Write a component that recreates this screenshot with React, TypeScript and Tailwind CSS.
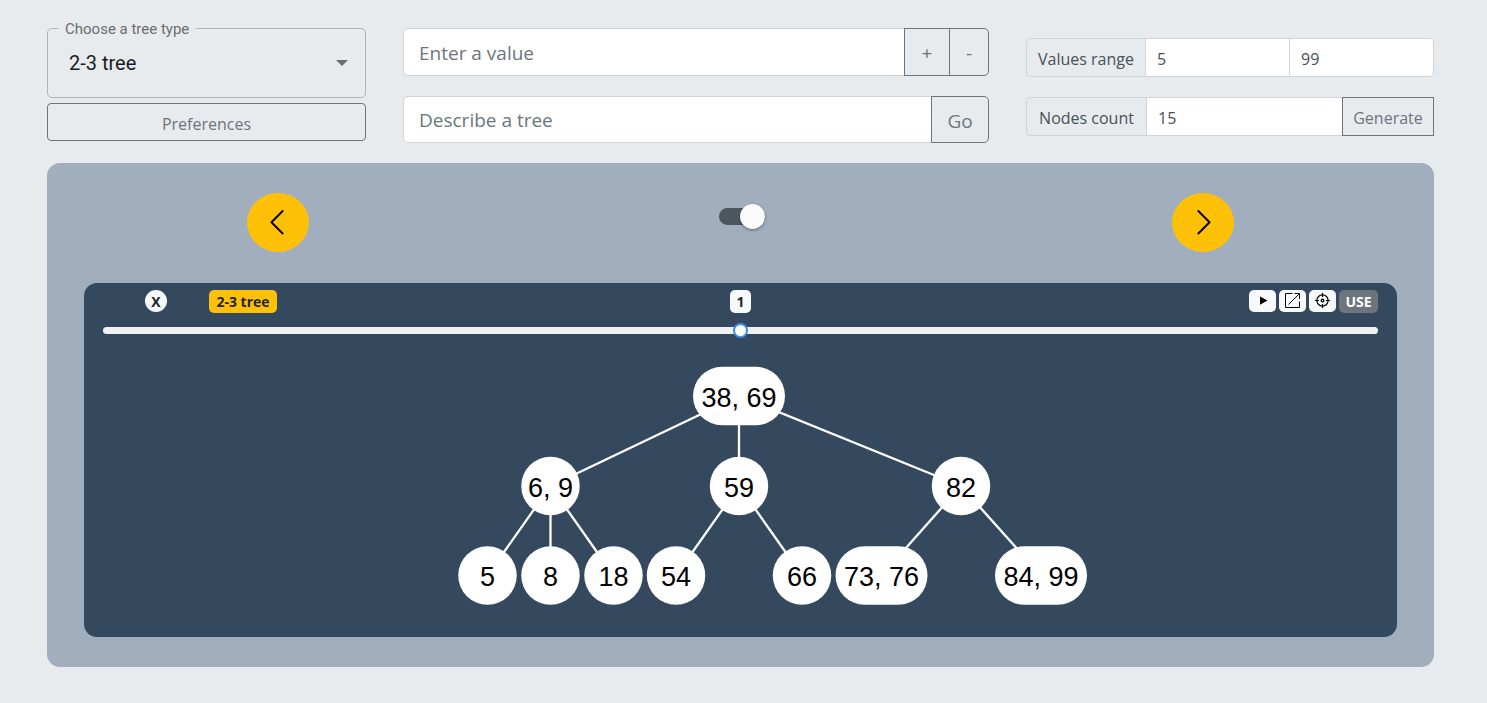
import { useState } from "react";

type TreeNode = { label: string; x: number; y: number; wide?: boolean };

const nodes: TreeNode[] = [
  { label: "38, 69", x: 359, y: 51, wide: true },
  { label: "6, 9", x: 170.5, y: 141 },
  { label: "59", x: 359, y: 141 },
  { label: "82", x: 581, y: 141 },
  { label: "5", x: 107.5, y: 230.5 },
  { label: "8", x: 170.5, y: 230.5 },
  { label: "18", x: 233.5, y: 230.5 },
  { label: "54", x: 296, y: 230.5 },
  { label: "66", x: 422, y: 230.5 },
  { label: "73, 76", x: 501.5, y: 230.5, wide: true },
  { label: "84, 99", x: 661, y: 230.5, wide: true },
];

const edges: [number, number][] = [
  [0, 1],
  [0, 2],
  [0, 3],
  [1, 4],
  [1, 5],
  [1, 6],
  [2, 7],
  [2, 8],
  [3, 9],
  [3, 10],
];

function TreeDiagram() {
  return (
    <svg width="721" height="292" viewBox="0 0 721 292" className="max-w-full" role="img" aria-label="2-3 tree">
      {edges.map(([from, to]) => (
        <line
          key={`${from}-${to}`}
          x1={nodes[from].x}
          y1={nodes[from].y}
          x2={nodes[to].x}
          y2={nodes[to].y}
          stroke="#fff"
          strokeWidth="2.3"
        />
      ))}
      {nodes.map((n) => {
        const w = n.wide ? 92 : 58.5;
        return (
          <g key={n.label}>
            <rect x={n.x - w / 2} y={n.y - 29.25} width={w} height="58.5" rx="29.25" fill="#fff" />
            <text
              x={n.x}
              y={n.y + 10.5}
              textAnchor="middle"
              className="fill-black font-['Liberation_Sans',Arial,sans-serif] text-[27px]"
            >
              {n.label}
            </text>
          </g>
        );
      })}
    </svg>
  );
}

function Arrow({ left }: { left?: boolean }) {
  return (
    <svg width="30" height="30" viewBox="0 0 16 16" fill="none" stroke="#000" strokeWidth="1" strokeLinecap="round" strokeLinejoin="round">
      <path d={left ? "M10.5 1.6 L4.5 7.6 L10.5 13.6" : "M5.5 1.6 L11.5 7.6 L5.5 13.6"} />
    </svg>
  );
}

const outline = "border border-[#6c757d] pt-[3px] text-[#6c757d]";
const field = "w-0 min-w-0 border border-[#ced4da] bg-white pt-[2px] outline-none";
const groupLabel = "flex items-center justify-center rounded-l-[4px] border border-[#ced4da] pt-[2px] whitespace-nowrap";
const iconBadge = "flex h-[22px] w-[27px] items-center justify-center rounded-[5px] bg-[#f8f9fa]";

export default function App() {
  const [step, setStep] = useState(1);
  const [on, setOn] = useState(true);

  return (
    <main className="min-h-screen bg-[#e8ebee] pt-[18px] pr-[53px] pb-9 pl-[47px] font-['Open_Sans','Noto_Sans',sans-serif] text-[16px] text-[#212529]">
      <div className="grid grid-cols-[minmax(0,319fr)_minmax(0,586fr)_minmax(0,408fr)] gap-x-[37px]">
        <div className="flex flex-col">
          <fieldset className="h-20 min-w-0 rounded-[5px] border border-[#b0b3b7] px-[10px] font-[Roboto,sans-serif]">
            <legend className="h-5 px-[7px] text-[15px] leading-[22px] text-[#6b6d70]">
              <label htmlFor="tree-type">Choose a tree type</label>
            </legend>
            <div className="relative flex">
              <select id="tree-type" className="h-[50px] w-full appearance-none bg-transparent pl-[11px] text-[20px] text-[#1c1d1f] outline-none">
                <option>2-3 tree</option>
              </select>
              <svg className="pointer-events-none absolute top-[22px] right-[7px]" width="12" height="6" viewBox="0 0 12 6" fill="#6b6d70">
                <path d="M0 0h12L6 6z" />
              </svg>
            </div>
          </fieldset>
          <button type="button" className={`mt-[5px] h-[38px] rounded-[4px] ${outline}`}>
            Preferences
          </button>
        </div>

        <div className="flex flex-col gap-5 pt-[10px] text-[19px]">
          <div className="flex h-12">
            <input aria-label="Enter a value" placeholder="Enter a value" className={`${field} flex-1 rounded-l-[5px] border-r-0 px-[15px] placeholder:text-[#6c757d]`} />
            <button type="button" className={`w-[46px] ${outline}`}>+</button>
            <button type="button" className={`-ml-px w-10 rounded-r-[5px] ${outline}`}>-</button>
          </div>
          <div className="flex h-[47px]">
            <input aria-label="Describe a tree" placeholder="Describe a tree" className={`${field} flex-1 rounded-l-[5px] border-r-0 px-[15px] placeholder:text-[#6c757d]`} />
            <button type="button" className={`w-[58px] rounded-r-[5px] ${outline}`}>Go</button>
          </div>
        </div>

        <div className="flex flex-col gap-5 pt-5 text-[#495057]">
          <div className="flex h-[39px]">
            <label htmlFor="range-min" className={`w-[120px] ${groupLabel}`}>
              Values range
            </label>
            <input id="range-min" defaultValue="5" className={`${field} -ml-px flex-1 px-[11px]`} />
            <input aria-label="Values range maximum" defaultValue="99" className={`${field} -ml-px flex-1 rounded-r-[4px] px-[11px]`} />
          </div>
          <div className="flex h-[39px]">
            <label htmlFor="node-count" className={`w-[121px] ${groupLabel}`}>
              Nodes count
            </label>
            <input id="node-count" defaultValue="15" className={`${field} -ml-px flex-1 px-[11px]`} />
            <button type="button" className={`-ml-px w-[92px] ${outline}`}>Generate</button>
          </div>
        </div>
      </div>

      <section className="mt-5 rounded-[13px] bg-[#a0aebe] pb-[30px]">
        <div className="grid h-[120px] grid-cols-3 justify-items-center pt-[30px]">
          <button type="button" aria-label="Previous" className="flex h-[59px] w-[62px] items-center justify-center rounded-[50%] bg-[#ffc107]">
            <Arrow left />
          </button>
          <input
            type="checkbox"
            role="switch"
            aria-label="Show tree"
            checked={on}
            onChange={(e) => setOn(e.target.checked)}
            className="relative z-0 mt-[11px] ml-[3px] flex h-[25px] w-[46px] appearance-none items-center before:size-[25px] before:rounded-full before:bg-[#fafafa] before:shadow-[0_1px_3px_rgba(0,0,0,0.4)] after:absolute after:inset-x-0 after:inset-y-[4px] after:-z-10 after:rounded-full after:bg-[#4e565f] checked:justify-end"
          />
          <button type="button" aria-label="Next" className="flex h-[59px] w-[62px] items-center justify-center rounded-[50%] bg-[#ffc107]">
            <Arrow />
          </button>
        </div>

        <div className="mx-[37px] h-[354px] rounded-[13px] bg-[#34495e] px-[19px] pt-[7px]">
          <div className="grid h-[22px] grid-cols-[1fr_auto_1fr] text-[14px] leading-[23px] font-bold">
            <div className="flex pl-[42px]">
              <button type="button" aria-label="Close" className="size-[22px] rounded-full bg-[#f8f9fa]">X</button>
              <span className="ml-[42px] flex w-[68px] justify-center rounded-[5px] bg-[#ffc107] whitespace-nowrap">2-3 tree</span>
            </div>
            <output className="flex w-[21px] justify-center rounded-[5px] bg-[#f8f9fa]">{step}</output>
            <div className="flex justify-end gap-[3px]">
              <button type="button" aria-label="Play" className={iconBadge}>
                <svg width="16" height="16" viewBox="0 0 16 16"><path d="M5 3.4v8.4L12.5 7.6z" /></svg>
              </button>
              <button type="button" aria-label="Export" className={iconBadge}>
                <svg width="16" height="16" viewBox="0 0 16 16" fill="none" stroke="#000">
                  <path d="M7.5 .5H.5v14h14V8.5" />
                  <path d="M3.5 11.5 14 1M9.5 .5h5V6" />
                </svg>
              </button>
              <button type="button" aria-label="Center" className={iconBadge}>
                <svg width="16" height="16" viewBox="0 0 16 16" fill="none" stroke="#000">
                  <circle cx="7.5" cy="7.5" r="5.6" strokeWidth="1.2" />
                  <circle cx="7.5" cy="7.5" r="1.3" strokeWidth="1.3" />
                  <path d="M7.5 0v3.9M7.5 11.1V15M0 7.5h3.9M11.1 7.5H15" strokeWidth="1.2" />
                </svg>
              </button>
              <button type="button" className="w-[39px] rounded-[5px] bg-[#6c757d] text-white">USE</button>
            </div>
          </div>
          <input
            type="range"
            min={0}
            max={2}
            value={step}
            aria-label="Step"
            onChange={(e) => setStep(Number(e.target.value))}
            className="mt-[15px] block h-[7px] w-full appearance-none rounded-full bg-[#f1f1f1] [&::-webkit-slider-thumb]:size-[15px] [&::-webkit-slider-thumb]:appearance-none [&::-webkit-slider-thumb]:rounded-full [&::-webkit-slider-thumb]:border-2 [&::-webkit-slider-thumb]:border-[#3b8eea] [&::-webkit-slider-thumb]:bg-white"
          />
          <div className="mt-[11px] flex justify-center">
            <TreeDiagram />
          </div>
        </div>
      </section>
    </main>
  );
}
